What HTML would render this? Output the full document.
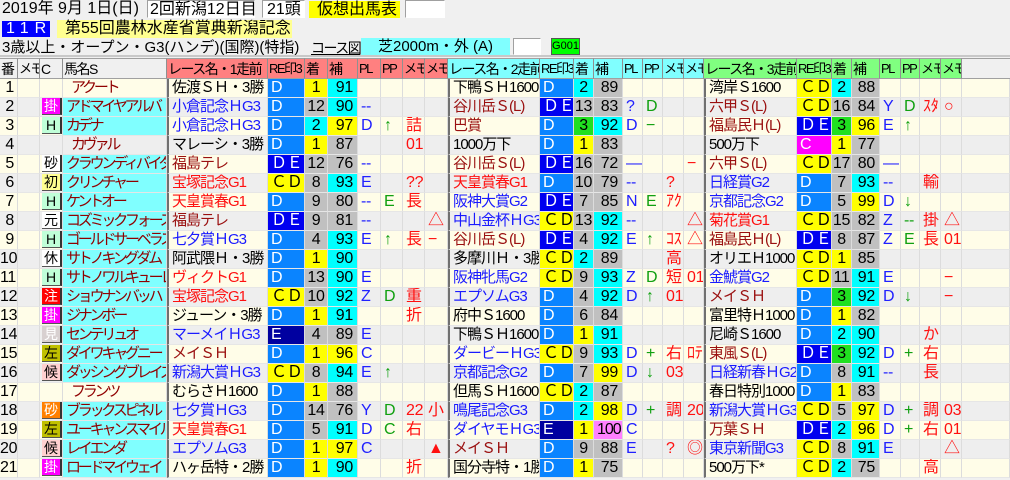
<!DOCTYPE html>
<html><head><meta charset="utf-8">
<style>
*{box-sizing:border-box}
body{margin:0;width:1010px;height:480px;overflow:hidden;background:#f0f0f0;font-family:"Liberation Sans","Noto Sans CJK JP",sans-serif;font-size:16px;color:#000;position:relative}
.a{position:absolute;white-space:nowrap;line-height:18px}
.wb{background:#fff;border:1px solid #a0a0a0;border-right-color:#fff;border-bottom-color:#fff}
table{position:absolute;left:0;top:58px;width:1010px;table-layout:fixed;border-collapse:separate;border-spacing:0}
td{height:19px;padding:0 0 0 3px;line-height:18px;white-space:nowrap;overflow:hidden;border-right:1px solid #dcdcdc;border-bottom:1px solid #e6e6e6;font-size:16px;letter-spacing:-0.3px}
tr.hd td{height:21px;font-size:14px;letter-spacing:-1.5px;border-right:1px solid #909090;border-top:1px solid #a0a0a0;border-bottom:1px solid #a0a0a0;padding-left:1px}
tr.hd td.sm{font-size:13px;letter-spacing:-1.5px}
tr.o td{background:#fffde8}
tr.e td{background:#eeeeee}
tr td.n{text-align:right;padding-right:3px;padding-left:0}
td.h,td.hn{font-size:15px;letter-spacing:-3.2px}
tr td.h{background:#80ffff;color:#900000}
td.hn{color:#900000;padding-left:8px}
tr td.r{border-left:2px solid #707070;font-size:15px;letter-spacing:-1px}
.k{color:#000}.u{color:#1a1aff}.rd{color:#ff1010}.dr{color:#9a1010}
tr td.x1{background:#0a84ff;color:#fff}
tr td.x2{background:#0000f0;color:#fff}
tr td.x3{background:#ffff00;color:#000}
tr td.x4{background:#0000a0;color:#fff}
tr td.x5{background:#ff00ff;color:#fff}
tr td.f1{background:#ffff00;text-align:center;padding:0}
tr td.f2{background:#00ffff;text-align:center;padding:0}
tr td.f3{background:#20e020;text-align:center;padding:0}
tr td.fg{background:#c0c0c0;text-align:center;padding:0}
tr td.py{background:#ffff00;text-align:right;padding-right:4px}
tr td.pc{background:#00ffff;text-align:right;padding-right:4px}
tr td.pg{background:#c0c0c0;text-align:right;padding-right:4px}
tr td.pk{background:#ff80ff;text-align:right;padding-right:2px;letter-spacing:-1px}
.pl{color:#2020ff}.pp{color:#10a010}.me{color:#ff1010}
.b{display:inline-block;width:20px;height:17px;margin-left:-1px;border-right:2px solid #333;border-bottom:1px solid #555;font-size:14px;line-height:17px;text-align:center;vertical-align:top;letter-spacing:0}
.bm{background:#ff00ff;color:#fff}.bh{background:#c0ffd8}.bw{background:#fff}.by{background:#ffff90}.br{background:#ff0000;color:#fff}.bg{background:#d8d0d0;color:#fff}.bo{background:#c0c000}.bp{background:#ffd0d0}.bor{background:#ff8000;color:#fff}
</style></head><body>
<div class="a" style="left:2px;top:0">2019年 9月 1日(日)</div>
<div class="a wb" style="left:147px;top:0;width:108px;height:18px;padding-left:2px">2回新潟12日目</div>
<div class="a wb" style="left:262px;top:0;width:43px;height:18px;padding-left:4px">21頭</div>
<div class="a" style="left:309px;top:1px;width:91px;height:17px;background:#ffff00;padding-left:8px">仮想出馬表</div>
<div class="a wb" style="left:405px;top:0;width:40px;height:18px"></div>
<div class="a" style="left:2px;top:21px;width:48px;height:16px;background:#0000ff;color:#fff;letter-spacing:6px;padding-left:4px;line-height:16px">11R</div>
<div class="a" style="left:57px;top:20px;width:235px;height:18px;background:#ffff90;padding-left:8px">第55回農林水産省賞典新潟記念</div>
<div class="a" style="left:2px;top:39px;font-size:15px">3歳以上・オープン・G3(ハンデ)(国際)(特指)</div>
<div class="a" style="left:311px;top:39px;font-size:14px;text-decoration:underline;letter-spacing:-1.5px">コース図</div>
<div class="a" style="left:361px;top:38px;width:149px;height:17px;background:#80ffff;padding-left:17px;font-size:15px">芝2000m・外 (A)</div>
<div class="a wb" style="left:513px;top:38px;width:28px;height:17px"></div>
<div class="a" style="left:551px;top:38px;width:29px;height:17px;background:#00ff00;border:1px solid #555;font-size:11px;line-height:15px;text-align:center">G001</div>
<div class="a" style="left:0;top:55px;width:1010px;height:2px;background:#c8c8c8"></div>
<table>
<colgroup>
<col style="width:18px"><col style="width:22px"><col style="width:23px"><col style="width:104px">
<col style="width:101px"><col style="width:37px"><col style="width:23px"><col style="width:30px"><col style="width:23px"><col style="width:22px"><col style="width:22px"><col style="width:23px">
<col style="width:92px"><col style="width:34px"><col style="width:20px"><col style="width:29px"><col style="width:20px"><col style="width:20px"><col style="width:21px"><col style="width:20px">
<col style="width:93px"><col style="width:35px"><col style="width:20px"><col style="width:28px"><col style="width:21px"><col style="width:19px"><col style="width:21px"><col style="width:21px">
<col style="width:48px">
</colgroup>
<tr class="hd">
<td style="background:#f0f0f0">番</td><td class="sm" style="background:#f0f0f0">メモ</td><td style="background:#f0f0f0">C</td><td style="background:#f0f0f0">馬名S</td>
<td style="background:#ff8080">レース名・1走前</td><td class="sm" style="background:#ff8080">RE印3</td><td style="background:#ff8080">着</td><td style="background:#ff8080">補</td><td class="sm" style="background:#ff8080">PL</td><td class="sm" style="background:#ff8080">PP</td><td class="sm" style="background:#ff8080">メモ</td><td class="sm" style="background:#ff8080">メモ</td>
<td style="background:#80ffff">レース名・2走前</td><td class="sm" style="background:#80ffff">RE印3</td><td style="background:#80ffff">着</td><td style="background:#80ffff">補</td><td class="sm" style="background:#80ffff">PL</td><td class="sm" style="background:#80ffff">PP</td><td class="sm" style="background:#80ffff">メモ</td><td class="sm" style="background:#80ffff">メモ</td>
<td style="background:#80ff80">レース名・3走前</td><td class="sm" style="background:#80ff80">RE印3</td><td style="background:#80ff80">着</td><td style="background:#80ff80">補</td><td class="sm" style="background:#80ff80">PL</td><td class="sm" style="background:#80ff80">PP</td><td class="sm" style="background:#80ff80">メモ</td><td class="sm" style="background:#80ff80">メモ</td>
<td style="background:#f0f0f0;border-right:0"></td></tr>

<tr class="o"><td class="n">1</td><td></td><td></td><td class="hn">アクート</td>
<td class="r k">佐渡ＳＨ・3勝</td><td class="x1">D</td><td class="f1">1</td><td class="pc">91</td><td></td><td></td><td></td><td></td>
<td class="r k">下鴨ＳＨ1600</td><td class="x1">D</td><td class="f2">2</td><td class="pg">89</td><td></td><td></td><td></td><td></td>
<td class="r k">湾岸Ｓ1600</td><td class="x3">ＣＤ</td><td class="f2">2</td><td class="pg">88</td><td></td><td></td><td></td><td></td><td></td></tr>

<tr class="e"><td class="n">2</td><td></td><td><span class="b bm">掛</span></td><td class="h">アドマイヤアルバ</td>
<td class="r u">小倉記念ＨG3</td><td class="x1">D</td><td class="fg">12</td><td class="pc">90</td><td class="pl">--</td><td></td><td></td><td></td>
<td class="r dr">谷川岳Ｓ(L)</td><td class="x2">ＤＥ</td><td class="fg">13</td><td class="pg">83</td><td class="pl">?</td><td class="pp">D</td><td></td><td></td>
<td class="r dr">六甲Ｓ(L)</td><td class="x3">ＣＤ</td><td class="fg">16</td><td class="pg">84</td><td class="pl">Y</td><td class="pp">D</td><td class="me">ｽﾀ</td><td class="me">○</td><td></td></tr>

<tr class="o"><td class="n">3</td><td></td><td><span class="b bh">H</span></td><td class="h">カデナ</td>
<td class="r u">小倉記念ＨG3</td><td class="x1">D</td><td class="f2">2</td><td class="py">97</td><td class="pl">D</td><td class="pp">↑</td><td class="me">詰</td><td></td>
<td class="r dr">巴賞</td><td class="x1">D</td><td class="f3">3</td><td class="pc">92</td><td class="pl">D</td><td class="pp">−</td><td></td><td></td>
<td class="r dr">福島民Ｈ(L)</td><td class="x2">ＤＥ</td><td class="f3">3</td><td class="py">96</td><td class="pl">E</td><td class="pp">↑</td><td></td><td></td><td></td></tr>

<tr class="e"><td class="n">4</td><td></td><td></td><td class="hn">カヴァル</td>
<td class="r k">マレーシ・3勝</td><td class="x1">D</td><td class="f1">1</td><td class="pg">87</td><td></td><td></td><td class="me">01</td><td></td>
<td class="r k">1000万下</td><td class="x1">D</td><td class="f1">1</td><td class="pg">83</td><td></td><td></td><td></td><td></td>
<td class="r k">500万下</td><td class="x5">C</td><td class="f1">1</td><td class="pg">77</td><td></td><td></td><td></td><td></td><td></td></tr>

<tr class="o"><td class="n">5</td><td></td><td><span class="b bw">砂</span></td><td class="h">クラウンディバイダ</td>
<td class="r dr">福島テレ</td><td class="x2">ＤＥ</td><td class="fg">12</td><td class="pg">76</td><td class="pl">--</td><td></td><td></td><td></td>
<td class="r dr">谷川岳Ｓ(L)</td><td class="x2">ＤＥ</td><td class="fg">16</td><td class="pg">72</td><td class="pl">—</td><td></td><td></td><td class="me">−</td>
<td class="r dr">六甲Ｓ(L)</td><td class="x3">ＣＤ</td><td class="fg">17</td><td class="pg">80</td><td class="pl">—</td><td></td><td></td><td></td><td></td></tr>

<tr class="e"><td class="n">6</td><td></td><td><span class="b by">初</span></td><td class="h">クリンチャー</td>
<td class="r rd">宝塚記念G1</td><td class="x3">ＣＤ</td><td class="fg">8</td><td class="pc">93</td><td class="pl">E</td><td></td><td class="me">??</td><td></td>
<td class="r rd">天皇賞春G1</td><td class="x1">D</td><td class="fg">10</td><td class="pg">79</td><td class="pl">--</td><td></td><td class="me">?</td><td></td>
<td class="r u">日経賞G2</td><td class="x1">D</td><td class="fg">7</td><td class="pc">93</td><td class="pl">--</td><td></td><td class="me">輸</td><td></td><td></td></tr>

<tr class="o"><td class="n">7</td><td></td><td><span class="b bh">H</span></td><td class="h">ケントオー</td>
<td class="r rd">天皇賞春G1</td><td class="x1">D</td><td class="fg">9</td><td class="pg">80</td><td class="pl">--</td><td class="pp">E</td><td class="me">長</td><td></td>
<td class="r u">阪神大賞G2</td><td class="x2">ＤＥ</td><td class="fg">7</td><td class="pg">85</td><td class="pl">N</td><td class="pp">E</td><td class="me">ｱｸ</td><td></td>
<td class="r u">京都記念G2</td><td class="x1">D</td><td class="fg">5</td><td class="py">99</td><td class="pl">D</td><td class="pp">↓</td><td></td><td></td><td></td></tr>

<tr class="e"><td class="n">8</td><td></td><td><span class="b bw">元</span></td><td class="h">コズミックフォース</td>
<td class="r dr">福島テレ</td><td class="x2">ＤＥ</td><td class="fg">9</td><td class="pg">81</td><td class="pl">--</td><td></td><td></td><td class="me">△</td>
<td class="r u">中山金杯ＨG3</td><td class="x3">ＣＤ</td><td class="fg">13</td><td class="pc">92</td><td class="pl">--</td><td></td><td></td><td class="me">△</td>
<td class="r rd">菊花賞G1</td><td class="x3">ＣＤ</td><td class="fg">15</td><td class="pg">82</td><td class="pl">Z</td><td class="pp">--</td><td class="me">掛</td><td class="me">△</td><td></td></tr>

<tr class="o"><td class="n">9</td><td></td><td><span class="b bh">H</span></td><td class="h">ゴールドサーベラス</td>
<td class="r u">七夕賞ＨG3</td><td class="x1">D</td><td class="fg">4</td><td class="pc">93</td><td class="pl">E</td><td class="pp">↑</td><td class="me">長</td><td class="me">−</td>
<td class="r dr">谷川岳Ｓ(L)</td><td class="x2">ＤＥ</td><td class="fg">4</td><td class="pc">92</td><td class="pl">E</td><td class="pp">↑</td><td class="me">ｺｽ</td><td class="me">△</td>
<td class="r dr">福島民Ｈ(L)</td><td class="x2">ＤＥ</td><td class="fg">8</td><td class="pg">87</td><td class="pl">Z</td><td class="pp">E</td><td class="me">長</td><td class="me">01</td><td></td></tr>

<tr class="e"><td class="n">10</td><td></td><td><span class="b bw">休</span></td><td class="h">サトノキングダム</td>
<td class="r k">阿武隈Ｈ・3勝</td><td class="x1">D</td><td class="f1">1</td><td class="pc">90</td><td></td><td></td><td></td><td></td>
<td class="r k">多摩川Ｈ・3勝</td><td class="x3">ＣＤ</td><td class="f2">2</td><td class="pg">89</td><td></td><td></td><td class="me">高</td><td></td>
<td class="r k">オリエＨ1000</td><td class="x3">ＣＤ</td><td class="f1">1</td><td class="pg">85</td><td></td><td></td><td></td><td></td><td></td></tr>

<tr class="o"><td class="n">11</td><td></td><td><span class="b bh">H</span></td><td class="h">サトノワルキューレ</td>
<td class="r rd">ヴィクトG1</td><td class="x1">D</td><td class="fg">13</td><td class="pc">90</td><td class="pl">E</td><td></td><td></td><td></td>
<td class="r u">阪神牝馬G2</td><td class="x3">ＣＤ</td><td class="fg">9</td><td class="pc">93</td><td class="pl">Z</td><td class="pp">D</td><td class="me">短</td><td class="me">01</td>
<td class="r u">金鯱賞G2</td><td class="x3">ＣＤ</td><td class="fg">11</td><td class="pc">91</td><td class="pl">E</td><td></td><td></td><td class="me">−</td><td></td></tr>

<tr class="e"><td class="n">12</td><td></td><td><span class="b br">注</span></td><td class="h">ショウナンバッハ</td>
<td class="r rd">宝塚記念G1</td><td class="x3">ＣＤ</td><td class="fg">10</td><td class="pc">92</td><td class="pl">Z</td><td class="pp">D</td><td class="me">重</td><td></td>
<td class="r u">エプソムG3</td><td class="x1">D</td><td class="fg">4</td><td class="pc">92</td><td class="pl">D</td><td class="pp">↑</td><td class="me">01</td><td></td>
<td class="r dr">メイＳＨ</td><td class="x1">D</td><td class="f3">3</td><td class="pc">92</td><td class="pl">D</td><td class="pp">↓</td><td></td><td class="me">−</td><td></td></tr>

<tr class="o"><td class="n">13</td><td></td><td><span class="b bm">掛</span></td><td class="h">ジナンボー</td>
<td class="r k">ジューン・3勝</td><td class="x1">D</td><td class="f1">1</td><td class="pc">91</td><td></td><td></td><td class="me">折</td><td></td>
<td class="r k">府中Ｓ1600</td><td class="x1">D</td><td class="fg">6</td><td class="pg">84</td><td></td><td></td><td></td><td></td>
<td class="r k">富里特Ｈ1000</td><td class="x1">D</td><td class="f1">1</td><td class="pg">82</td><td></td><td></td><td></td><td></td><td></td></tr>

<tr class="e"><td class="n">14</td><td></td><td><span class="b bg">見</span></td><td class="h">センテリュオ</td>
<td class="r u">マーメイＨG3</td><td class="x4">E</td><td class="fg">4</td><td class="pg">89</td><td class="pl">E</td><td></td><td></td><td></td>
<td class="r k">下鴨ＳＨ1600</td><td class="x1">D</td><td class="f1">1</td><td class="pc">91</td><td></td><td></td><td></td><td></td>
<td class="r k">尼崎Ｓ1600</td><td class="x1">D</td><td class="f2">2</td><td class="pc">90</td><td></td><td></td><td class="me">か</td><td></td><td></td></tr>

<tr class="o"><td class="n">15</td><td></td><td><span class="b bo">左</span></td><td class="h">ダイワキャグニー</td>
<td class="r dr">メイＳＨ</td><td class="x1">D</td><td class="f1">1</td><td class="py">96</td><td class="pl">C</td><td></td><td></td><td></td>
<td class="r u">ダービーＨG3</td><td class="x3">ＣＤ</td><td class="fg">9</td><td class="pc">93</td><td class="pl">D</td><td class="pp">+</td><td class="me">右</td><td class="me">ﾛﾃ</td>
<td class="r dr">東風Ｓ(L)</td><td class="x2">ＤＥ</td><td class="f3">3</td><td class="pc">92</td><td class="pl">D</td><td class="pp">+</td><td class="me">右</td><td></td><td></td></tr>

<tr class="e"><td class="n">16</td><td></td><td><span class="b bp">候</span></td><td class="h">ダッシングブレイズ</td>
<td class="r u">新潟大賞ＨG3</td><td class="x3">ＣＤ</td><td class="fg">8</td><td class="pc">94</td><td class="pl">E</td><td class="pp">↑</td><td></td><td></td>
<td class="r u">京都記念G2</td><td class="x1">D</td><td class="fg">7</td><td class="py">99</td><td class="pl">D</td><td class="pp">↓</td><td class="me">03</td><td></td>
<td class="r u">日経新春ＨG2</td><td class="x1">D</td><td class="fg">8</td><td class="pc">91</td><td class="pl">--</td><td></td><td class="me">長</td><td></td><td></td></tr>

<tr class="o"><td class="n">17</td><td></td><td></td><td class="hn">フランツ</td>
<td class="r k">むらさＨ1600</td><td class="x1">D</td><td class="f1">1</td><td class="pg">88</td><td></td><td></td><td></td><td></td>
<td class="r k">但馬ＳＨ1600</td><td class="x3">ＣＤ</td><td class="f2">2</td><td class="pg">87</td><td></td><td></td><td></td><td></td>
<td class="r k">春日特別1000</td><td class="x1">D</td><td class="f1">1</td><td class="pg">83</td><td></td><td></td><td></td><td></td><td></td></tr>

<tr class="e"><td class="n">18</td><td></td><td><span class="b bor">砂</span></td><td class="h">ブラックスピネル</td>
<td class="r u">七夕賞ＨG3</td><td class="x1">D</td><td class="fg">14</td><td class="pg">76</td><td class="pl">Y</td><td class="pp">D</td><td class="me">22</td><td class="me">小</td>
<td class="r u">鳴尾記念G3</td><td class="x1">D</td><td class="f2">2</td><td class="py">98</td><td class="pl">D</td><td class="pp">+</td><td class="me">調</td><td class="me">20</td>
<td class="r u">新潟大賞ＨG3</td><td class="x3">ＣＤ</td><td class="fg">5</td><td class="py">97</td><td class="pl">D</td><td class="pp">+</td><td class="me">調</td><td class="me">03</td><td></td></tr>

<tr class="o"><td class="n">19</td><td></td><td><span class="b bo">左</span></td><td class="h">ユーキャンスマイル</td>
<td class="r rd">天皇賞春G1</td><td class="x1">D</td><td class="fg">5</td><td class="pc">91</td><td class="pl">D</td><td class="pp">C</td><td class="me">右</td><td></td>
<td class="r u">ダイヤモＨG3</td><td class="x4">E</td><td class="f1">1</td><td class="pk">100</td><td class="pl">C</td><td></td><td></td><td></td>
<td class="r dr">万葉ＳＨ</td><td class="x2">ＤＥ</td><td class="f2">2</td><td class="py">96</td><td class="pl">D</td><td class="pp">+</td><td class="me">右</td><td class="me">01</td><td></td></tr>

<tr class="e"><td class="n">20</td><td></td><td><span class="b bp">候</span></td><td class="h">レイエンダ</td>
<td class="r u">エプソムG3</td><td class="x1">D</td><td class="f1">1</td><td class="py">97</td><td class="pl">C</td><td></td><td></td><td class="me">▲</td>
<td class="r dr">メイＳＨ</td><td class="x1">D</td><td class="fg">9</td><td class="pg">88</td><td class="pl">E</td><td></td><td class="me">?</td><td class="me">◎</td>
<td class="r u">東京新聞G3</td><td class="x3">ＣＤ</td><td class="fg">8</td><td class="pc">91</td><td class="pl">E</td><td></td><td></td><td class="me">△</td><td></td></tr>

<tr class="o"><td class="n">21</td><td></td><td><span class="b bm">掛</span></td><td class="h">ロードマイウェイ</td>
<td class="r k">ハヶ岳特・2勝</td><td class="x1">D</td><td class="f1">1</td><td class="pc">90</td><td></td><td></td><td class="me">折</td><td></td>
<td class="r k">国分寺特・1勝</td><td class="x1">D</td><td class="f1">1</td><td class="pg">75</td><td></td><td></td><td></td><td></td>
<td class="r k">500万下*</td><td class="x3">ＣＤ</td><td class="f2">2</td><td class="pg">75</td><td></td><td></td><td class="me">高</td><td></td><td></td></tr>
</table>
</body></html>
